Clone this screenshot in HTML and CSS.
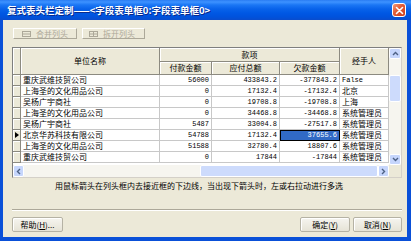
FILE: index.html
```html
<!DOCTYPE html>
<html>
<head>
    <meta charset="utf-8">
    <title>复式表头栏定制</title>
    <link rel="stylesheet" href="styles.css">
</head>
<body>
    <div class="window">
        <div class="titlebar">
            <span class="titlebar__text">复式表头栏定制——&lt;字段表单框0:字段表单框0&gt;</span>
            <span class="titlebar__close">
                <svg width="9" height="9" viewBox="0 0 9 9"><path d="M1.5 1.5 L7.5 7.5 M7.5 1.5 L1.5 7.5" stroke="#fff" stroke-width="1.6" stroke-linecap="round"/></svg>
            </span>
        </div>
        <div class="frame">
            <div class="toolbar">
                <button class="tool" disabled>
                    <svg width="9" height="6" viewBox="0 0 9 6"><rect x="0.5" y="0.5" width="8" height="5" fill="none" stroke="#aca899"/><path d="M0.5 3 H8.5" stroke="#aca899"/></svg>
                    合并列头
                </button>
                <button class="tool tool--wide" disabled>
                    <svg width="9" height="6" viewBox="0 0 9 6"><rect x="0.5" y="0.5" width="8" height="5" fill="none" stroke="#aca899"/><path d="M0.5 3 H8.5 M4.5 0.5 V5.5" stroke="#aca899"/></svg>
                    拆开列头
                </button>
            </div>

            <div class="grid">
                <div class="grid__main">
                    <div class="grid__head">
                        <div class="hcell hcell--ind"></div>
                        <div class="hcell hcell--name">单位名称</div>
                        <div class="hcell hcell--group">款项</div>
                        <div class="hcell hcell--person">经手人</div>
                        <div class="hcell hcell--sub">付款金额</div>
                        <div class="hcell hcell--sub">应付总额</div>
                        <div class="hcell hcell--sub">欠款金额</div>
                    </div>
                    <div class="grid__body">
                        <div class="row">
                            <div class="cell cell--ind"></div>
                            <div class="cell">重庆武维技贸公司</div>
                            <div class="cell cell--num">56000</div>
                            <div class="cell cell--num">433843.2</div>
                            <div class="cell cell--num">-377843.2</div>
                            <div class="cell cell--mono">False</div>
                        </div>
                        <div class="row">
                            <div class="cell cell--ind"></div>
                            <div class="cell">上海圣的文化用品公司</div>
                            <div class="cell cell--num">0</div>
                            <div class="cell cell--num">17132.4</div>
                            <div class="cell cell--num">-17132.4</div>
                            <div class="cell">北京</div>
                        </div>
                        <div class="row">
                            <div class="cell cell--ind"></div>
                            <div class="cell">吴杨广宇商社</div>
                            <div class="cell cell--num">0</div>
                            <div class="cell cell--num">19708.8</div>
                            <div class="cell cell--num">-19708.8</div>
                            <div class="cell">上海</div>
                        </div>
                        <div class="row">
                            <div class="cell cell--ind"></div>
                            <div class="cell">上海圣的文化用品公司</div>
                            <div class="cell cell--num">0</div>
                            <div class="cell cell--num">34468.8</div>
                            <div class="cell cell--num">-34468.8</div>
                            <div class="cell">系统管理员</div>
                        </div>
                        <div class="row">
                            <div class="cell cell--ind"></div>
                            <div class="cell">吴杨广宇商社</div>
                            <div class="cell cell--num">5487</div>
                            <div class="cell cell--num">33004.8</div>
                            <div class="cell cell--num">-27517.8</div>
                            <div class="cell">系统管理员</div>
                        </div>
                        <div class="row">
                            <div class="cell cell--ind"><span class="pointer"></span></div>
                            <div class="cell">北京华苏科技有限公司</div>
                            <div class="cell cell--num">54788</div>
                            <div class="cell cell--num">17132.4</div>
                            <div class="cell cell--num cell--selected">37655.6</div>
                            <div class="cell">系统管理员</div>
                        </div>
                        <div class="row">
                            <div class="cell cell--ind"></div>
                            <div class="cell">上海圣的文化用品公司</div>
                            <div class="cell cell--num">51588</div>
                            <div class="cell cell--num">32780.4</div>
                            <div class="cell cell--num">18807.6</div>
                            <div class="cell">系统管理员</div>
                        </div>
                        <div class="row">
                            <div class="cell cell--ind"></div>
                            <div class="cell">重庆武维技贸公司</div>
                            <div class="cell cell--num">0</div>
                            <div class="cell cell--num">17844</div>
                            <div class="cell cell--num">-17844</div>
                            <div class="cell">系统管理员</div>
                        </div>
                    </div>
                    <div class="hscroll">
                        <span class="sbtn">
                            <svg width="5" height="7" viewBox="0 0 5 7"><path d="M4 1 L1.5 3.5 L4 6" fill="none" stroke="#4d6185" stroke-width="1.4"/></svg>
                        </span>
                        <span class="hscroll__track"><span class="hscroll__thumb"></span></span>
                        <span class="sbtn">
                            <svg width="5" height="7" viewBox="0 0 5 7"><path d="M1 1 L3.5 3.5 L1 6" fill="none" stroke="#4d6185" stroke-width="1.4"/></svg>
                        </span>
                    </div>
                </div>
                <div class="vscroll">
                    <span class="sbtn sbtn--v">
                        <svg width="7" height="5" viewBox="0 0 7 5"><path d="M1 4 L3.5 1.5 L6 4" fill="none" stroke="#4d6185" stroke-width="1.4"/></svg>
                    </span>
                    <span class="vscroll__track"><span class="vscroll__thumb"></span></span>
                    <span class="sbtn sbtn--v">
                        <svg width="7" height="5" viewBox="0 0 7 5"><path d="M1 1 L3.5 3.5 L6 1" fill="none" stroke="#4d6185" stroke-width="1.4"/></svg>
                    </span>
                    <span class="vscroll__corner"></span>
                </div>
            </div>

            <p class="hint">用鼠标箭头在列头框内去接近框的下边线，当出现下箭头时，左或右拉动进行多选</p>

            <div class="separator"></div>

            <div class="footer">
                <button class="btn btn--help">帮助(<u>H</u>)...</button>
                <button class="btn btn--ok">确定(<u>Y</u>)</button>
                <button class="btn">取消(<u>N</u>)</button>
            </div>
        </div>
    </div>
</body>
</html>
```

FILE: styles.css
```css
body {
    --xp-blue: #0a50d8;
    --face: #ece9d8;
    --shadow: #aca899;
    margin: 0;
    font-family: "Noto Sans CJK SC", sans-serif;
    font-size: 8px;
    color: #000000;
}

.window {
    width: 411px;
    height: 241px;
    display: flex;
    flex-direction: column;
}

.titlebar {
    height: 20px;
    flex: none;
    display: flex;
    align-items: center;
    justify-content: space-between;
    padding: 0 5px 0 7px;
    box-sizing: border-box;
    background: linear-gradient(to bottom, #2a7cf2 0%, #3d92ff 10%, #1a76f4 25%, #0862ea 45%, #0058e4 65%, #0052dc 85%, #0a4ccc 100%);
}

.titlebar__text {
    font-size: 9.5px;
    font-weight: bold;
    color: #ffffff;
    text-shadow: 1px 1px 0 #0a2a8a;
    line-height: 14px;
}

.titlebar__close {
    width: 14px;
    height: 14px;
    display: flex;
    align-items: center;
    justify-content: center;
    box-sizing: border-box;
    border: 1px solid #ffffff;
    border-radius: 3px;
    background: linear-gradient(135deg, #f09a7a 0%, #e25a34 45%, #cc3d1a 100%);
}

.frame {
    flex: 1;
    display: flex;
    flex-direction: column;
    background: var(--face);
    border: solid var(--xp-blue);
    border-width: 0 4px 4px 3px;
    padding: 8px 5px 0 9px;
}

/* toolbar */

.toolbar {
    display: flex;
    gap: 5px;
    margin-left: 1px;
}

.tool {
    width: 64px;
    height: 11px;
    display: flex;
    align-items: center;
    gap: 5px;
    padding: 0 0 0 8px;
    box-sizing: border-box;
    font: 8px "Noto Sans CJK SC", sans-serif;
    color: var(--shadow);
    background: var(--face);
    border: 1px solid;
    border-color: #ffffff var(--shadow) var(--shadow) #ffffff;
}

.tool--wide {
    width: 63px;
    padding-left: 6px;
}

/* grid */

.grid {
    margin-top: 8px;
    display: flex;
    width: 390px;
    box-sizing: border-box;
    border: 1px solid #7f7f7f;
    border-right-color: #d4d0c8;
    border-bottom-color: #d4d0c8;
}

.grid__main {
    width: 376px;
}

.grid__head {
    display: grid;
    grid-template-columns: 8px 139px 52px 68px 60px 49px;
    grid-template-rows: 14px 13px;
}

.hcell {
    display: flex;
    align-items: center;
    justify-content: center;
    box-sizing: border-box;
    background: var(--face);
    border-right: 1px solid #8c8a80;
    border-bottom: 1px solid #8c8a80;
    box-shadow: inset 1px 1px 0 #ffffff;
    line-height: 12px;
}

.hcell--ind,
.hcell--name,
.hcell--person {
    grid-row: span 2;
}

.hcell--group {
    grid-column: span 3;
}

.grid__body {
    height: 90px;
    background: #ffffff;
}

.row {
    display: grid;
    grid-template-columns: 8px 139px 52px 68px 60px 49px;
    height: 11px;
}

.cell {
    box-sizing: border-box;
    padding: 0 2px;
    border-right: 1px solid #c8c8c8;
    border-bottom: 1px solid #c8c8c8;
    line-height: 10px;
    white-space: nowrap;
    overflow: hidden;
}

.cell--ind {
    position: relative;
    padding: 0;
    background: var(--face);
    border-color: #8c8a80;
    box-shadow: inset 1px 1px 0 #ffffff;
}

.pointer {
    position: absolute;
    left: 2px;
    top: 2px;
    border-left: 4px solid #000000;
    border-top: 3px solid transparent;
    border-bottom: 3px solid transparent;
}

.cell--num,
.cell--mono {
    font-family: "Liberation Mono", monospace;
    font-size: 7px;
}

.cell--num {
    text-align: right;
}

.cell--selected {
    color: #ffffff;
    background: #316ac5;
    outline: 1px solid #000000;
    outline-offset: -1px;
}

/* scrollbars */

.hscroll {
    height: 12px;
    display: flex;
    background: #f6f5ef;
}

.sbtn {
    width: 11px;
    height: 12px;
    flex: none;
    display: flex;
    align-items: center;
    justify-content: center;
    box-sizing: border-box;
    border: 1px solid #ffffff;
    border-radius: 2px;
    background: #c6d6fc;
}

.sbtn--v {
    width: 12px;
    height: 11px;
}

.hscroll__track {
    flex: 1;
    display: flex;
    justify-content: flex-end;
}

.hscroll__thumb {
    width: 178px;
    box-sizing: border-box;
    border: 1px solid #ffffff;
    border-radius: 2px;
    background: #cddbfc;
}

.vscroll {
    width: 12px;
    display: flex;
    flex-direction: column;
    background: #f6f5ef;
}

.vscroll__track {
    flex: 1;
    padding-top: 16px;
}

.vscroll__thumb {
    display: block;
    height: 27px;
    box-sizing: border-box;
    border: 1px solid #ffffff;
    border-radius: 2px;
    background: #cddbfc;
}

.vscroll__corner {
    height: 12px;
    background: var(--face);
}

/* bottom */

.hint {
    margin: 2px 0 0;
    height: 12px;
    line-height: 12px;
    padding-right: 16px;
    text-align: center;
}

.separator {
    margin-top: 17px;
    border-top: 1px solid var(--shadow);
    border-bottom: 1px solid #ffffff;
}

.footer {
    display: flex;
    gap: 3px;
    margin-top: 6px;
}

.btn {
    width: 49px;
    height: 15px;
    padding: 0;
    font: 8px "Noto Sans CJK SC", sans-serif;
    color: #000000;
    background: linear-gradient(to bottom, #f6f5f0, #e6e3d6);
    border: 1px solid #b5b2a4;
    border-radius: 2px;
    box-shadow: inset 1px 1px 0 #ffffff;
}

.btn u {
    text-decoration: underline;
}

.btn--help {
    width: 51px;
}

.btn--ok {
    width: 50px;
    margin-left: auto;
}
```
